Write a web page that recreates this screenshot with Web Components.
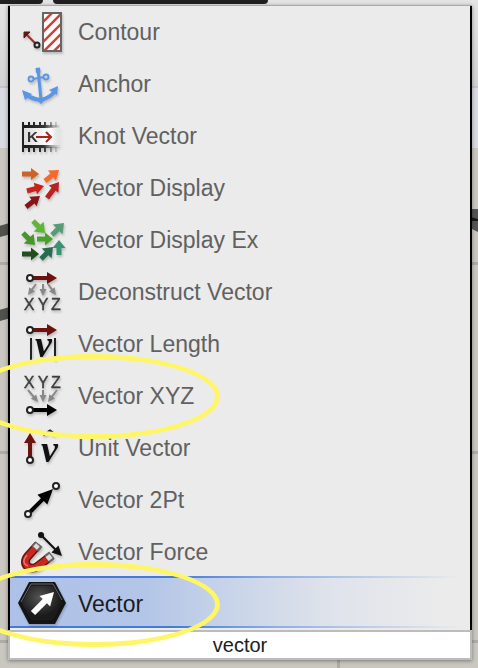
<!DOCTYPE html>
<html lang="en">
<head>
<meta charset="utf-8">
<title>Component search</title>
<style>
  html, body { margin: 0; min-height: 100%; }
  body { font-family: "Liberation Sans", Arial, sans-serif; background: #cac7c0; overflow: hidden; }
</style>
</head>
<body>
<search-page></search-page>
<script>
// Solid arrow polygon from a tail point to a tip.
const arrow = (x1, y1, x2, y2, fill, w = 4, hl = 9, hw = 11) => {
  const a = Math.atan2(y2 - y1, x2 - x1), len = Math.hypot(x2 - x1, y2 - y1);
  const pts = [[0, -w / 2], [len - hl, -w / 2], [len - hl, -hw / 2], [len, 0], [len - hl, hw / 2], [len - hl, w / 2], [0, w / 2]]
    .map(([u, v]) => (x1 + u * Math.cos(a) - v * Math.sin(a)).toFixed(2) + ',' + (y1 + u * Math.sin(a) + v * Math.cos(a)).toFixed(2));
  return `<polygon points="${pts.join(' ')}" fill="${fill}"/>`;
};
const dot = (x, y) => `<circle cx="${x}" cy="${y}" r="3" fill="#fff" stroke="#222" stroke-width="2"/>`;
const letters = y => `<g font-family="Liberation Sans, sans-serif" font-size="16" fill="#3c3c3c" text-anchor="middle" stroke="#3c3c3c" stroke-width=".4"><text x="11" y="${y}">X</text><text x="25" y="${y}">Y</text><text x="38" y="${y}">Z</text></g>`;
const vee = (x, y) => `<text x="${x}" y="${y}" font-family="Liberation Serif, serif" font-style="italic" font-weight="bold" font-size="38" fill="#111">v</text>`;
const ticks = (y1, y2) => [11, 16, 22, 27, 33, 38].map(x => `M${x} ${y1}V${y2}`).join('');

const ICONS = {
  contour: `<rect x="25" y="5" width="18" height="38" fill="#fff"/>
    <clipPath id="c"><rect x="25" y="5" width="18" height="38"/></clipPath>
    <path clip-path="url(#c)" d="M22 17L42 -3M22 27L46 3M22 37L48 11M22 47L48 21M24 55L48 31M32 57L48 41" stroke="#cf4338" stroke-width="2.600"/>
    <rect x="25" y="5" width="18" height="38" fill="none" stroke="#666" stroke-width="2"/>
    <path d="M17 35L9 27" stroke="#a8251c" stroke-width="2"/><path d="M6 24h6l-6 6z" fill="#651616" stroke="#651616"/>
    <circle cx="19" cy="37" r="2.5" fill="#ddd" stroke="#222" stroke-width="2"/>`,
  anchor: `<g fill="none" stroke="#5a96e3"><path d="M20 9L23 40" stroke-width="3"/><path d="M15 19L26 17" stroke-width="2"/>
    <circle cx="13" cy="19" r="2.5" stroke-width="1.8"/><circle cx="28" cy="17" r="2.5" stroke-width="1.8"/>
    <path d="M8 34Q13 39 23 40Q33 37 37 31" stroke-width="4"/></g>
    <path d="M17.500 8l4.500-.5.5 5-4.500.5zM4 30l10 4-7 6zM40 26l-1 9-8-5zM18 39l10-1-5 6z" fill="#5a96e3"/>`,
  knot: `<defs><linearGradient id="f" x1="4" x2="44" gradientUnits="userSpaceOnUse"><stop stop-color="#171717"/><stop offset=".55" stop-color="#333"/><stop offset="1" stop-color="#999" stop-opacity="0"/></linearGradient>
    <linearGradient id="w"><stop stop-color="#ddd"/><stop offset=".7" stop-color="#fff"/><stop offset="1" stop-color="#fff" stop-opacity="0"/></linearGradient></defs>
    <rect x="6" y="15" width="38" height="20" fill="url(#w)"/>
    <rect x="4" y="13" width="38" height="3" fill="url(#f)"/><rect x="4" y="33" width="38" height="3" fill="url(#f)"/>
    <path d="M5 10V40" stroke="#222" stroke-width="2"/><path d="${ticks(10, 15)}${ticks(35, 40)}" stroke="url(#f)" stroke-width="2"/>
    <text x="9" y="30" font-family="Liberation Sans, sans-serif" font-weight="bold" font-size="15" fill="#333">K</text>
    <path d="M18 25H33M28 20l5 5-5 5" fill="none" stroke="#aa231d" stroke-width="2"/>`,
  display: arrow(4, 10, 21, 10, '#cf6226', 5, 8, 12) + arrow(27, 17, 41, 6, '#f46a2b', 5, 9, 13) + arrow(9, 27, 26, 22, '#c6231c', 5, 9, 12)
    + arrow(29, 34, 41, 18, '#b82220', 5, 9, 12) + arrow(8, 43, 22, 32, '#851617', 5, 9, 12),
  displayex: arrow(15, 5, 27, 17, '#5cb735', 5, 9, 14) + arrow(5, 17, 17, 29, '#46962c', 5, 9, 14) + arrow(19, 23, 35, 23, '#48a12c', 5, 8, 13)
    + arrow(34, 19, 46, 7, '#579c77', 5, 9, 14) + arrow(4, 38, 21, 38, '#214f1c', 5, 8, 13) + arrow(23, 43, 35, 31, '#286c50', 5, 9, 14) + arrow(41, 39, 41, 24, '#399372', 5, 8, 13),
  deconstruct: arrow(13, 10, 39, 10, '#6c130d', 4, 10, 12) + dot(12, 10)
    + arrow(18, 16, 10, 27, '#888', 2, 7, 7) + arrow(25, 16, 25, 28, '#888', 2, 7, 7) + arrow(30, 16, 38, 27, '#888', 2, 7, 7) + letters(42),
  length: arrow(13, 10, 39, 10, '#6c130d', 4, 10, 12) + dot(12, 10) + `<path d="M13 18V40M37 18V40" stroke="#222" stroke-width="2"/>` + vee(17, 37),
  xyz: letters(16) + arrow(10, 18, 20, 30, '#888', 2, 7, 7) + arrow(25, 18, 25, 30, '#888', 2, 7, 7) + arrow(39, 18, 30, 30, '#888', 2, 7, 7)
    + arrow(13, 38, 39, 38, '#000', 4, 10, 12) + dot(12, 38),
  unit: arrow(12, 35, 12, 9, '#6c130d', 4, 10, 12) + dot(12, 36) + vee(23, 38) + `<path d="M25 11l7-4 5 4" fill="none" stroke="#222" stroke-width="3"/>`,
  twopt: arrow(11, 37, 35, 13, '#000', 4, 15, 14) + dot(10, 38) + dot(38, 10),
  force: `<path d="M20 17L10 28C3 36 12 44 20 38L33 28" fill="none" stroke="#64140f" stroke-width="9"/>
    <path d="M20 17L10 28C3 36 12 44 20 38L33 28" fill="none" stroke="#c82820" stroke-width="6"/>
    <path d="M21 16l-4 5M34 27l-5 4" stroke="#666" stroke-width="9"/><path d="M20 17l-3 3M33 28l-4 3" stroke="#ddd" stroke-width="5"/>
    <path d="M9 27C3 34 7 37 10 38" stroke="#ef7770" stroke-width="1.500" fill="none"/>`
    + arrow(23, 7, 44, 28, '#111', 2, 10, 10) + `<circle cx="23" cy="7" r="3" fill="#111"/>`,
  vector: `<defs><radialGradient id="h" cx=".45" cy=".35"><stop stop-color="#555"/><stop offset="1" stop-color="#1b1b1b"/></radialGradient></defs>
    <path d="M0 23L11 2H37L48 23L37 44H11Z" fill="#151515"/><path d="M3 23L13 5H35L45 23L35 41H13Z" fill="url(#h)" stroke="#111"/>
    <path d="M3 22L13 4H35L44 20" fill="none" stroke="#6a6a6a" stroke-width="1"/>` + arrow(15, 33, 36, 12, '#fff', 6, 13, 15)
};

class ToolIcon extends HTMLElement {
  connectedCallback() {
    this.attachShadow({ mode: 'open' }).innerHTML = `<style>
      :host { display: block; width: 48px; height: 48px; flex: none; }
      svg { display: block; overflow: visible; filter: drop-shadow(1px 2px 1px rgba(0,0,0,.2)); }
    </style><svg width="48" height="48" viewBox="0 0 48 48" aria-hidden="true">${ICONS[this.getAttribute('name')]}</svg>`;
  }
}
customElements.define('tool-icon', ToolIcon);

class MarkerRing extends HTMLElement {
  connectedCallback() {
    this.attachShadow({ mode: 'open' }).innerHTML = `<style>
      :host { position: absolute; z-index: 2; left: -42px; top: -14px; width: 252px; height: 85px; pointer-events: none; }
      div { box-sizing: border-box; width: 100%; height: 100%; border: 5px solid #fff667; border-radius: 50%; }
    </style><div></div>`;
  }
}
customElements.define('marker-ring', MarkerRing);

class ResultRow extends HTMLElement {
  connectedCallback() {
    this.attachShadow({ mode: 'open' }).innerHTML = `<style>
      :host { display: block; position: relative; color: #616161; }
      button { box-sizing: border-box; display: flex; align-items: center; gap: 12px; width: 100%; height: 52px;
        padding: 4px 8px 0; border: 0; background: none; color: inherit; font: inherit; text-align: left; white-space: nowrap; }
      :host([selected]) { color: #1c1c1e; }
      :host([selected]) button {
        background:
          linear-gradient(90deg, #447ad9 0 35%, #8eaee6 58%, #ebebeb 98%) top / 100% 2px no-repeat,
          linear-gradient(90deg, #447ad9 0 35%, #8eaee6 58%, #ebebeb 98%) bottom / 100% 2px no-repeat,
          linear-gradient(90deg, #adc1e8 0, #b4c6e7 30%, #ccd7e9 52%, #dfe3eb 70%, #ebebeb 94%); }
    </style><button type="button"><tool-icon name="${this.getAttribute('icon')}"></tool-icon><span><slot></slot></span></button>
    ${this.hasAttribute('marked') ? '<marker-ring></marker-ring>' : ''}`;
  }
}
customElements.define('result-row', ResultRow);

class SearchField extends HTMLElement {
  connectedCallback() {
    this.attachShadow({ mode: 'open' }).innerHTML = `<style>
      :host { display: block; }
      input { display: block; box-sizing: border-box; width: 100%; height: 30px; margin: 0; padding: 0; border: 2px solid #bcbcbc;
        border-radius: 0; background: #fff; color: #202020; font: 20px/24px "Liberation Sans", Arial, sans-serif; text-align: center; outline: 0; }
    </style><input type="text" aria-label="Search components" value="${this.getAttribute('value')}">`;
  }
}
customElements.define('search-field', SearchField);

class ResultPopup extends HTMLElement {
  connectedCallback() {
    this.attachShadow({ mode: 'open' }).innerHTML = `<style>
      :host { display: block; position: relative; box-shadow: 0 1px 4px rgba(0,0,0,.4); }
      nav { display: flow-root; border: solid #000; border-width: 0 2px; padding: 0 0 2px; background: #ebebeb; font-size: 23px; line-height: 28px; }
      .edge { height: 1px; background: #aaa; }
      .list { margin-top: -2px; }
    </style><div class="edge"></div><nav aria-label="Results"><div class="list"><slot></slot></div></nav><slot name="field"></slot>`;
  }
}
customElements.define('result-popup', ResultPopup);

class CanvasBackdrop extends HTMLElement {
  connectedCallback() {
    this.attachShadow({ mode: 'open' }).innerHTML = `<style>
      :host { position: absolute; inset: 0; overflow: hidden; background:
        linear-gradient(#aeaca6, #aeaca6) 0 262px / 100% 3px no-repeat,
        linear-gradient(#aeaca6, #aeaca6) 0 451px / 100% 3px no-repeat,
        linear-gradient(#aeaca6, #aeaca6) 0 640px / 100% 3px no-repeat,
        linear-gradient(#aeaca6, #aeaca6) 337px 0 / 3px 100% no-repeat,
        #cac7c0; }
      .bar { height: 86px; background: linear-gradient(#e4e4e4, #d2d2d2); border-bottom: 2px solid #c4c4cd; display: flex; gap: 10px; align-items: flex-start; }
      .bar i { height: 4px; background: #202020; border-radius: 0 0 6px 6px; }
      .bar i:first-child { width: 43px; border-bottom-left-radius: 0; }
      .bar i:last-child { width: 215px; }
      .strip { height: 60px; background: #dadae3; }
      svg { position: absolute; top: 200px; }
      .l { left: 0; } .r { right: 0; }
    </style><div class="bar"><i></i><i></i></div><div class="strip"></div>
    <svg class="l" width="12" height="130"><path d="M-6 33L12 28M-6 117L12 112" stroke="#51514e" stroke-width="11"/></svg>
    <svg class="r" width="8" height="40"><path d="M0 9H8V32L0 28Z" fill="#555"/><path d="M0 17l8 2v2H0z" fill="#171717"/></svg>`;
  }
}
customElements.define('canvas-backdrop', CanvasBackdrop);

class SearchPage extends HTMLElement {
  connectedCallback() {
    this.attachShadow({ mode: 'open' }).innerHTML = `<style>
      :host { display: block; position: relative; box-sizing: border-box; min-height: 100vh; padding: 5px 6px 8px 8px; overflow: hidden; }
    </style><canvas-backdrop></canvas-backdrop>
    <result-popup>
      <result-row icon="contour">Contour</result-row>
      <result-row icon="anchor">Anchor</result-row>
      <result-row icon="knot">Knot Vector</result-row>
      <result-row icon="display">Vector Display</result-row>
      <result-row icon="displayex">Vector Display Ex</result-row>
      <result-row icon="deconstruct">Deconstruct Vector</result-row>
      <result-row icon="length">Vector Length</result-row>
      <result-row icon="xyz" marked>Vector XYZ</result-row>
      <result-row icon="unit">Unit Vector</result-row>
      <result-row icon="twopt">Vector 2Pt</result-row>
      <result-row icon="force">Vector Force</result-row>
      <result-row icon="vector" selected marked>Vector</result-row>
      <search-field slot="field" value="vector"></search-field>
    </result-popup>`;
  }
}
customElements.define('search-page', SearchPage);
</script>
</body>
</html>
